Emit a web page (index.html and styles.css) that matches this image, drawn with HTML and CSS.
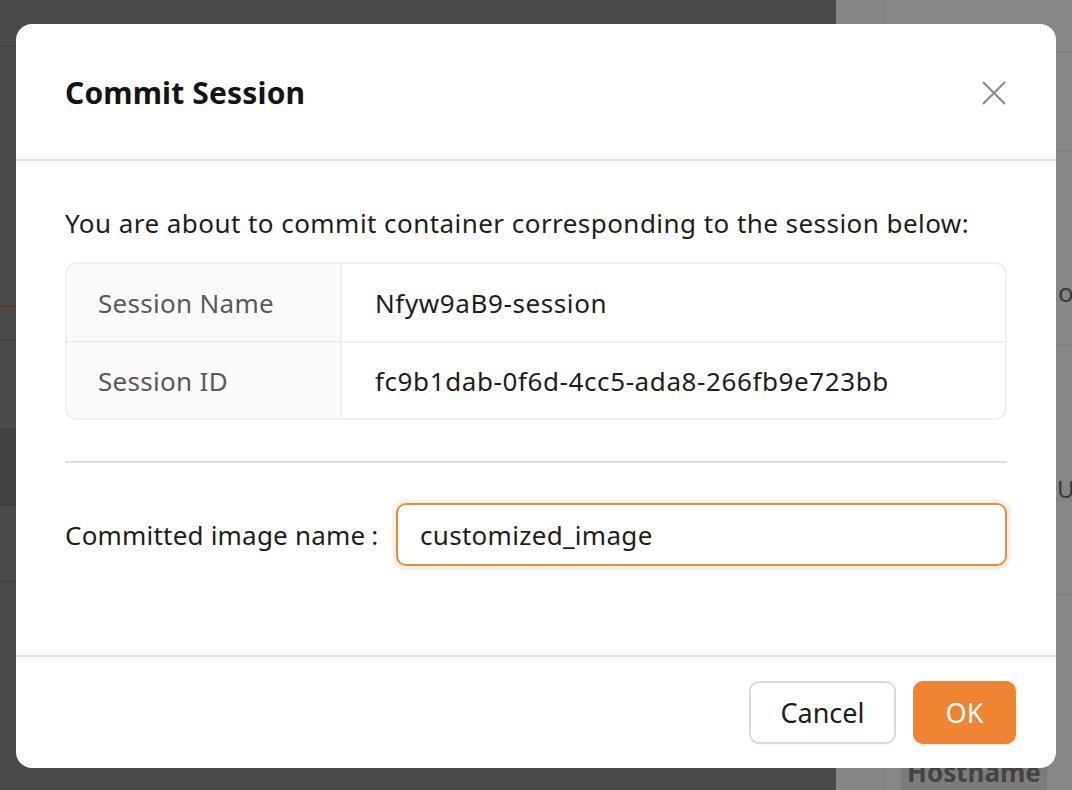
FILE: index.html
```html
<!DOCTYPE html>
<html lang="en">
<head>
<meta charset="utf-8">
<title>Commit Session</title>
<link rel="stylesheet" href="styles.css">
</head>
<body>
<div class="page">
  <div class="left-pane">
    <div class="bg-row r1"></div>
    <div class="bg-row r2"></div>
    <div class="bg-row r3"></div>
    <div class="bg-row r4 accent"></div>
    <div class="bg-row r5"></div>
    <div class="bg-row r6"></div>
    <div class="bg-row r7"></div>
    <div class="bg-row r8 dark"></div>
    <div class="bg-row r9"></div>
  </div>
  <div class="right-pane">
    <div class="side-col"></div>
    <div class="main-col">
      <div class="main-row m1"></div>
      <div class="main-row m2"></div>
      <div class="main-row m3"></div>
      <div class="main-row m4"></div>
      <div class="peek p1">o</div>
      <div class="peek p2">U</div>
      <div class="host">Hostname</div>
    </div>
  </div>
</div>

<div class="modal">
  <div class="modal-header">
    <h1 class="modal-title">Commit Session</h1>
    <button class="close-btn" aria-label="Close">
      <svg width="24" height="24" viewBox="0 0 24 24"><path d="M1 1 L23 23 M23 1 L1 23" stroke="#8c8c8c" stroke-width="2.2" fill="none"/></svg>
    </button>
  </div>
  <div class="modal-body">
    <p class="intro">You are about to commit container corresponding to the session below:</p>
    <div class="desc">
      <div class="desc-row">
        <div class="desc-label">Session Name</div>
        <div class="desc-value">Nfyw9aB9-session</div>
      </div>
      <div class="desc-row">
        <div class="desc-label">Session ID</div>
        <div class="desc-value">fc9b1dab-0f6d-4cc5-ada8-266fb9e723bb</div>
      </div>
    </div>
    <div class="divider"></div>
    <div class="form-row">
      <label class="form-label">Committed image name<span class="colon">:</span></label>
      <div class="input">customized_image</div>
    </div>
  </div>
  <div class="modal-footer">
    <button class="btn btn-default">Cancel</button>
    <button class="btn btn-primary">OK</button>
  </div>
</div>
</body>
</html>
```
FILE: styles.css
```css
* { box-sizing: border-box; }
html, body { margin: 0; padding: 0; }
body {
  width: 1072px;
  height: 790px;
  overflow: hidden;
  font-family: "Noto Sans", "Open Sans", sans-serif;
  position: relative;
}
.page {
  display: flex;
  height: 790px;
}
.left-pane {
  width: 836px;
  background: #4a4a4a;
  display: flex;
  flex-direction: column;
}
.bg-row { border-bottom: 1px solid #444; flex-shrink: 0; }
.r1 { height: 47px; }
.r2 { height: 26px; }
.r3 { height: 79px; }
.r4 { height: 155px; border-bottom: 2px solid #5a3a1c; }
.r5 { height: 34px; border-bottom: 2px solid #434343; }
.r6 { height: 62px; border-bottom: 2px solid #464646; }
.r7 { height: 25px; border-bottom: none; }
.r8 { height: 78px; background: #424242; border-bottom: none; }
.r9 { height: 77px; border-bottom: 2px solid #444; }
.right-pane {
  flex: 1;
  display: flex;
  background: #868686;
}
.side-col {
  width: 49px;
  border-right: 1px solid #7f7f7f;
  background: #858585;
}
.main-col {
  flex: 1;
  position: relative;
  background: #868686;
  display: flex;
  flex-direction: column;
}
.main-row { border-bottom: 1px solid #7e7e7e; flex-shrink: 0; }
.m1 { height: 52px; }
.m2 { height: 100px; }
.m3 { height: 193px; }
.m4 { height: 250px; }
.peek {
  position: absolute;
  left: 173px;
  font-size: 26px;
  color: #3a3a3a;
}
.p1 { top: 274px; }
.p2 { top: 472px; left: 172px; font-size: 24px; }
.host {
  position: absolute;
  left: 16px;
  top: 754px;
  font-size: 26px;
  font-weight: 700;
  color: #444;
  background: #7c7c7c;
  padding: 0 6px;
}

.modal {
  position: absolute;
  left: 16px;
  top: 24px;
  width: 1040px;
  height: 744px;
  background: #fff;
  border-radius: 16px;
  overflow: hidden;
  display: flex;
  flex-direction: column;
}
.modal-header {
  height: 137px;
  border-bottom: 2px solid #dedede;
  display: flex;
  align-items: center;
  justify-content: space-between;
  padding: 0 50px 0 49px;
  flex-shrink: 0;
}
.modal-title {
  margin: 0;
  margin-top: 2px;
  font-size: 30px;
  font-weight: 700;
  color: #141414;
  letter-spacing: 0.15px;
}
.close-btn {
  border: 0;
  background: transparent;
  padding: 0;
  width: 24px;
  height: 24px;
  margin-top: 2px;
  display: flex;
}
.modal-body {
  flex: 1;
  padding: 44px 49px 0 49px;
}
.intro {
  margin: 0;
  font-size: 26px;
  letter-spacing: 0.45px;
  line-height: 36px;
  color: #1d1d1d;
  white-space: nowrap;
}
.desc {
  margin-top: 21px;
  border: 2px solid #efefef;
  border-radius: 12px;
  overflow: hidden;
}
.desc-row {
  display: flex;
  height: 77px;
}
.desc-row + .desc-row { border-top: 2px solid #efefef; }
.desc-label {
  width: 275px;
  background: #fafafa;
  border-right: 2px solid #efefef;
  padding-left: 31px;
  display: flex;
  align-items: center;
  font-size: 26px;
  letter-spacing: 0.3px;
  color: #595959;
}
.desc-value {
  flex: 1;
  padding-left: 33px;
  display: flex;
  align-items: center;
  font-size: 26px;
  letter-spacing: 0.6px;
  color: #1d1d1d;
}
.divider {
  margin-top: 41px;
  height: 2px;
  background: #dedede;
}
.form-row {
  margin-top: 40px;
  display: flex;
  align-items: center;
}
.form-label {
  width: 331px;
  font-size: 26px;
  letter-spacing: 0.2px;
  color: #1d1d1d;
  white-space: nowrap;
}
.colon { margin-left: 6px; }
.input {
  flex: 1;
  height: 63px;
  border: 2px solid #ee8a3a;
  border-radius: 10px;
  box-shadow: 0 0 0 4px #fdf1e6;
  padding-left: 22px;
  display: flex;
  align-items: center;
  font-size: 26px;
  letter-spacing: 0.3px;
  color: #1d1d1d;
}
.modal-footer {
  height: 113px;
  border-top: 2px solid #dedede;
  display: flex;
  justify-content: flex-end;
  align-items: flex-start;
  gap: 17px;
  padding: 24px 40px 0 0;
  flex-shrink: 0;
}
.btn {
  height: 63px;
  border-radius: 10px;
  font-family: inherit;
  font-size: 27px;
  padding: 0;
}
.btn-default {
  width: 147px;
  background: #fff;
  border: 2px solid #d9d9d9;
  color: #1d1d1d;
  box-shadow: 0 2px 0 rgba(0,0,0,0.02);
}
.btn-primary {
  width: 103px;
  background: #ef8533;
  border: 0;
  color: #fff;
  box-shadow: 0 2px 0 rgba(239,133,51,0.1);
}
```
